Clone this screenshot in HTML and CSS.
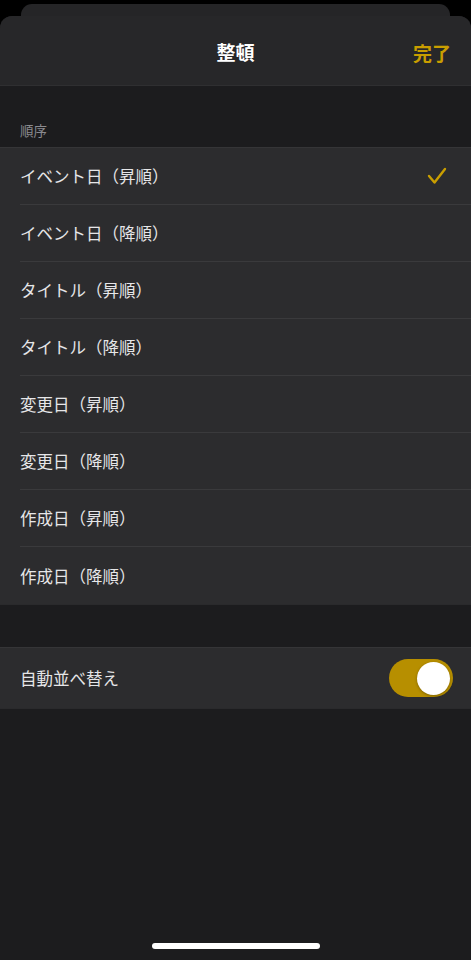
FILE: index.html
```html
<!DOCTYPE html>
<html lang="ja">
<head>
<meta charset="utf-8">
<link rel="stylesheet" href="styles.css">
</head>
<body>
<div class="back-card"></div>
<div class="sheet">
  <header class="nav">
    <span class="nav-title">整頓</span>
    <span class="nav-done">完了</span>
  </header>
  <div class="section-label">順序</div>
  <ul class="list">
    <li class="row"><span>イベント日（昇順）</span>
      <svg class="check" width="20" height="18" viewBox="0 0 20 18"><polyline points="2,9 7.5,15.5 18,2" fill="none" stroke="#c99e00" stroke-width="2.4" stroke-linecap="round" stroke-linejoin="round"/></svg>
    </li>
    <li class="row"><span>イベント日（降順）</span></li>
    <li class="row"><span>タイトル（昇順）</span></li>
    <li class="row"><span>タイトル（降順）</span></li>
    <li class="row"><span>変更日（昇順）</span></li>
    <li class="row"><span>変更日（降順）</span></li>
    <li class="row"><span>作成日（昇順）</span></li>
    <li class="row"><span>作成日（降順）</span></li>
  </ul>
  <ul class="list list-toggle">
    <li class="row row-toggle"><span>自動並べ替え</span>
      <span class="toggle"><span class="knob"></span></span>
    </li>
  </ul>
  <div class="spacer"></div>
  <div class="home-bar"></div>
</div>
</body>
</html>
```

FILE: styles.css
```css
* { box-sizing: border-box; }
html, body {
  margin: 0;
  padding: 0;
  background: #000;
  height: 960px;
  overflow: hidden;
}
body {
  font-family: "Noto Sans CJK JP", "Noto Sans", sans-serif;
  display: flex;
  flex-direction: column;
}
.back-card {
  height: 12px;
  margin: 4px 21px 0;
  background: #252527;
  border-radius: 11px 11px 0 0;
  flex-shrink: 0;
}
.sheet {
  flex: 1;
  background: #1c1c1e;
  border-radius: 12px 12px 0 0;
  display: flex;
  flex-direction: column;
  overflow: hidden;
}
.nav {
  height: 70px;
  background: #272729;
  border-bottom: 1px solid #2f2f31;
  display: flex;
  align-items: center;
  justify-content: center;
  position: relative;
  flex-shrink: 0;
}
.nav-title {
  color: #fff;
  font-size: 19px;
  font-weight: 700;
  margin-top: 2px;
}
.nav-done {
  position: absolute;
  right: 20px;
  top: 50%;
  transform: translateY(-46%);
  color: #c99e00;
  font-size: 19px;
  font-weight: 600;
}
.section-label {
  height: 62px;
  padding: 0 20px 8px;
  display: flex;
  align-items: flex-end;
  color: #8b8b90;
  font-size: 13.5px;
}
.list {
  list-style: none;
  margin: 0;
  padding: 0;
  background: #2c2c2e;
  box-shadow: 0 -1px 0 #353537, 0 1px 0 #2a2a2c;
}
.row {
  height: 57px;
  margin-left: 20px;
  padding-right: 24px;
  display: flex;
  align-items: center;
  justify-content: space-between;
  color: #e6e6e8;
  font-size: 16.5px;
  border-bottom: 1px solid #3a3a3c;
}
.row:last-child { border-bottom: none; }
.check { display: block; }
.list-toggle {
  margin-top: 44px;
}
.row-toggle {
  height: 60px;
  padding-right: 18px;
}
.toggle {
  width: 64px;
  height: 38px;
  border-radius: 19px;
  background: #b78f00;
  display: flex;
  align-items: center;
  justify-content: flex-end;
  padding-right: 3px;
}
.knob {
  width: 33px;
  height: 33px;
  border-radius: 50%;
  background: #fff;
  box-shadow: 0 1px 3px rgba(0,0,0,0.3);
}
.spacer { flex: 1; }
.home-bar {
  width: 168px;
  height: 6px;
  border-radius: 3px;
  background: #fff;
  align-self: center;
  margin-bottom: 11px;
  margin-left: 1px;
}
```
